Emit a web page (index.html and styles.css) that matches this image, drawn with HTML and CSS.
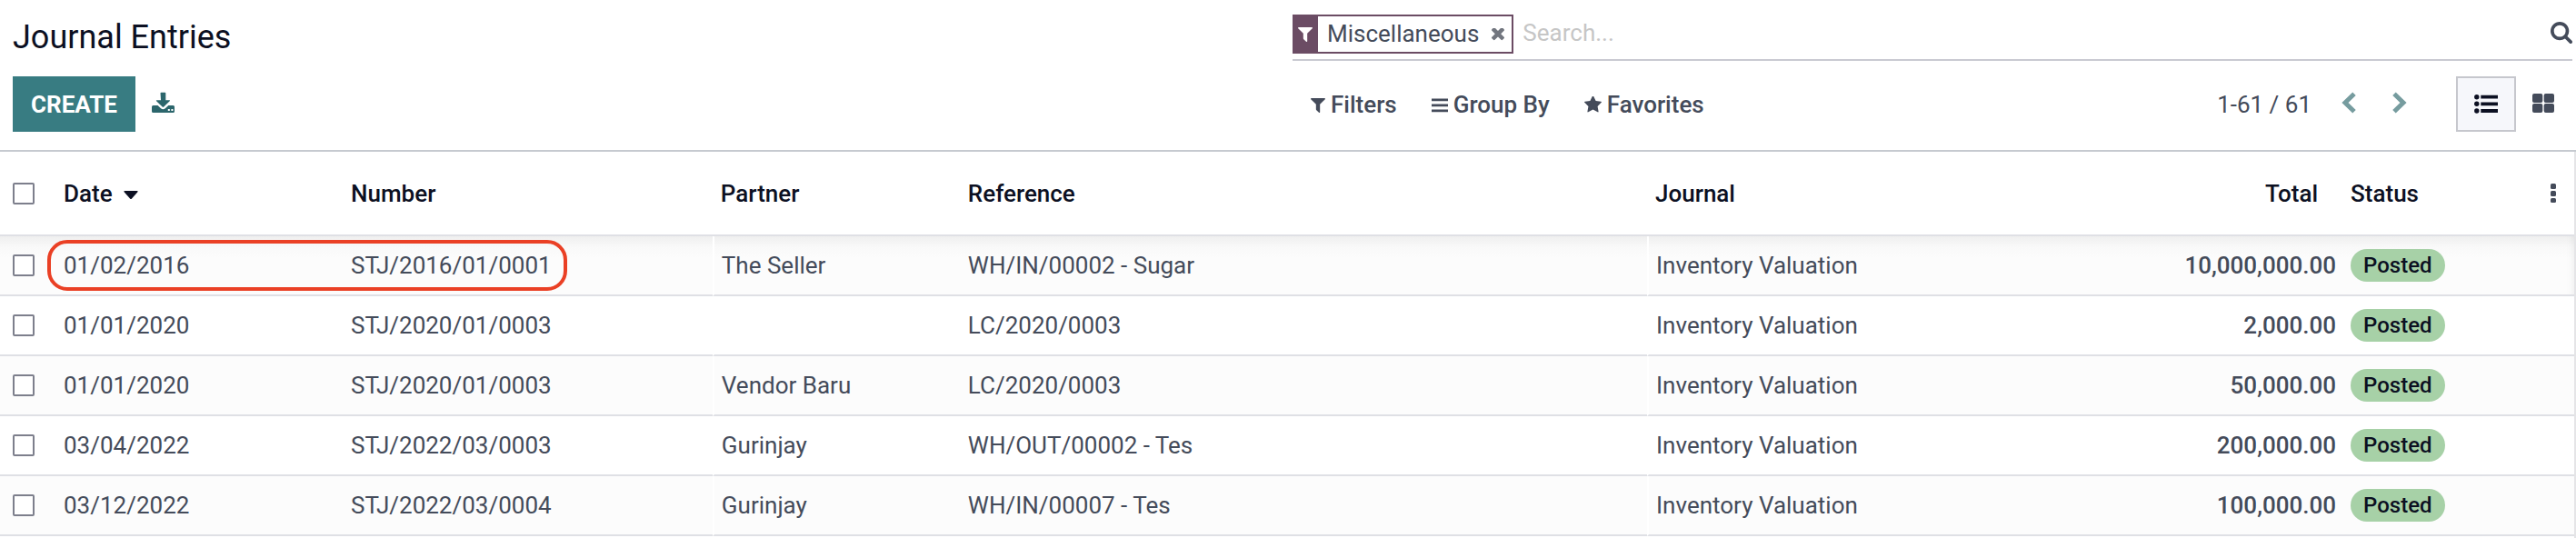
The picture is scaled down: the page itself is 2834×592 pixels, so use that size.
FILE: index.html
```
<!DOCTYPE html>
<html lang="en">
<head>
<meta charset="utf-8">
<title>Journal Entries</title>
<link rel="stylesheet" href="styles.css">
</head>
<body>
<svg class="sprite" aria-hidden="true">
  <symbol id="i-filter" viewBox="192 256 1408 1408"><path d="M1595 295q17 41-14 70l-493 493v742q0 42-39 59-13 5-25 5-27 0-45-19l-256-256q-19-19-19-45v-486l-493-493q-31-29-14-70 17-39 59-39h1280q42 0 59 39z"/></symbol>
</svg>
<header class="control-panel">
  <h1 class="title">Journal Entries</h1>
  <div class="search">
    <div class="facet">
      <span class="facet-icon"><svg class="icon-16"><use href="#i-filter"/></svg></span>
      <span class="facet-label">Miscellaneous</span>
      <button class="facet-remove" type="button" aria-label="Remove"><svg class="icon-14" viewBox="302 434 1188 1188"><path d="M1490 1322q0 40-28 68l-136 136q-28 28-68 28t-68-28l-294-294-294 294q-28 28-68 28t-68-28l-136-136q-28-28-28-68t28-68l294-294-294-294q-28-28-28-68t28-68l136-136q28-28 68-28t68 28l294 294 294-294q28-28 68-28t68 28l136 136q28 28 28 68t-28 68l-294 294 294 294q28 28 28 68z"/></svg></button>
    </div>
    <input class="search-input" type="text" placeholder="Search..." aria-label="Search">
    <button class="search-button" type="button" aria-label="Search"><svg class="icon-24" viewBox="64 128 1664 1664"><path d="M1216 832q0-185-131.5-316.5t-316.5-131.5-316.5 131.5-131.5 316.5 131.5 316.5 316.5 131.5 316.5-131.5 131.5-316.5zm512 832q0 52-38 90t-90 38q-54 0-90-38l-343-342q-179 124-399 124-143 0-273.5-55.5t-225-150-150-225-55.5-273.5 55.5-273.5 150-225 225-150 273.5-55.5 273.5 55.5 225 150 150 225 55.5 273.5q0 220-124 399l343 343q37 37 37 90z"/></svg></button>
  </div>
  <div class="actions">
    <button class="create" type="button">CREATE</button>
    <button class="download" type="button" aria-label="Export"><svg class="icon-download" viewBox="0 0 25 24"><path d="M9.500 1.500q0-.8.800-.8h4.200q.8 0 .8.800v7.800h4q1.300 0 .4 1l-6.500 6.300q-.8.700-1.600 0l-6.500-6.300q-.9-1 .4-1h4.500z"/><path d="M1.500 15h5l3.500 3.300q2.400 2 4.800 0l3.500-3.300h5.200q1.500 0 1.500 1.500v5q0 1.500-1.500 1.500h-22q-1.500 0-1.500-1.500v-5q0-1.500 1.500-1.500zm16.300 4.100v2h2v-2zm3.600 0v2h2v-2z" fill-rule="evenodd"/></svg></button>
  </div>
  <div class="toolbar">
    <div class="search-options">
      <button class="option" type="button"><svg class="icon-16"><use href="#i-filter"/></svg>Filters</button>
      <button class="option" type="button"><svg class="icon-18" viewBox="0 0 18 18"><path d="M0 1.500h18v2.800H0zM0 7.500h18v2.800H0zM0 13.500h18v2.800H0z"/></svg>Group By</button>
      <button class="option" type="button"><svg class="icon-19" viewBox="64 96 1664 1664"><path d="M1728 647q0 22-26 48l-363 354 86 500q1 7 1 20 0 21-10.500 35.500t-30.500 14.500q-19 0-40-12l-449-236-449 236q-22 12-40 12-21 0-31.500-14.500t-10.500-35.500q0-6 2-20l86-500-364-354q-25-27-25-48 0-37 56-46l502-73 225-455q19-41 49-41t49 41l225 455 502 73q56 9 56 46z"/></svg>Favorites</button>
    </div>
    <nav class="pager" aria-label="Pager">
      <span class="pager-text">1-61 / 61</span>
      <button class="pager-button" type="button" aria-label="Previous"><svg class="icon-24" viewBox="0 0 24 24"><path d="M18 2.300L8 12l10 9.700" class="chevron"/></svg></button>
      <button class="pager-button" type="button" aria-label="Next"><svg class="icon-24" viewBox="0 0 24 24"><path d="M6 2.300l10 9.700-10 9.700" class="chevron"/></svg></button>
    </nav>
    <div class="views">
      <button class="view active" type="button" aria-label="List view"><svg class="icon-26" viewBox="0 0 26 26"><circle cx="2.800" cy="4.700" r="2.700"/><circle cx="2.800" cy="12.300" r="2.700"/><circle cx="2.800" cy="20" r="2.700"/><path d="M7.300 2.800H26v3.800H7.300zM7.300 10.400H26v3.800H7.300zM7.300 18.100H26v3.800H7.300z"/></svg></button>
      <button class="view" type="button" aria-label="Kanban view"><svg class="icon-24" viewBox="0 0 24 24"><rect x="0" y="0" width="11.300" height="10" rx="2"/><rect x="12.700" y="0" width="11.300" height="10" rx="2"/><rect x="0" y="11" width="11.300" height="10" rx="2"/><rect x="12.700" y="11" width="11.300" height="10" rx="2"/></svg></button>
    </div>
  </div>
</header>
<main class="content">
  <table class="list">
    <colgroup>
      <col class="c-check"><col class="c-date"><col class="c-number"><col class="c-partner"><col class="c-reference"><col class="c-journal"><col class="c-total"><col class="c-status"><col class="c-menu">
    </colgroup>
    <thead>
      <tr>
        <th class="check"><input type="checkbox" aria-label="Select all"></th>
        <th>Date<svg class="caret" viewBox="0 0 16 10"><path d="M1.500 0h13q2 0 .7 1.500L9 8.500q-1 1-2 0L.8 1.500Q-.5 0 1.500 0z"/></svg></th>
        <th>Number</th>
        <th class="split">Partner</th>
        <th>Reference</th>
        <th class="split">Journal</th>
        <th class="amount">Total</th>
        <th>Status</th>
        <th class="menu"><button class="kebab" type="button" aria-label="Optional columns"><svg class="icon-kebab" viewBox="0 0 6 22"><rect y="0" width="6" height="6" rx="1.500"/><rect y="8" width="6" height="6" rx="1.500"/><rect y="16" width="6" height="5" rx="1.500"/></svg></button></th>
      </tr>
    </thead>
    <tbody>
      <tr>
        <td class="check"><input type="checkbox" aria-label="Select STJ/2016/01/0001"></td>
        <td class="marked">01/02/2016<span class="marker"></span></td>
        <td>STJ/2016/01/0001</td>
        <td class="split">The Seller</td>
        <td>WH/IN/00002 - Sugar</td>
        <td class="split">Inventory Valuation</td>
        <td class="amount">10,000,000.00</td>
        <td><span class="badge">Posted</span></td>
        <td></td>
      </tr>
      <tr>
        <td class="check"><input type="checkbox" aria-label="Select STJ/2020/01/0003"></td>
        <td>01/01/2020</td>
        <td>STJ/2020/01/0003</td>
        <td class="split"></td>
        <td>LC/2020/0003</td>
        <td class="split">Inventory Valuation</td>
        <td class="amount">2,000.00</td>
        <td><span class="badge">Posted</span></td>
        <td></td>
      </tr>
      <tr>
        <td class="check"><input type="checkbox" aria-label="Select STJ/2020/01/0003"></td>
        <td>01/01/2020</td>
        <td>STJ/2020/01/0003</td>
        <td class="split">Vendor Baru</td>
        <td>LC/2020/0003</td>
        <td class="split">Inventory Valuation</td>
        <td class="amount">50,000.00</td>
        <td><span class="badge">Posted</span></td>
        <td></td>
      </tr>
      <tr>
        <td class="check"><input type="checkbox" aria-label="Select STJ/2022/03/0003"></td>
        <td>03/04/2022</td>
        <td>STJ/2022/03/0003</td>
        <td class="split">Gurinjay</td>
        <td>WH/OUT/00002 - Tes</td>
        <td class="split">Inventory Valuation</td>
        <td class="amount">200,000.00</td>
        <td><span class="badge">Posted</span></td>
        <td></td>
      </tr>
      <tr>
        <td class="check"><input type="checkbox" aria-label="Select STJ/2022/03/0004"></td>
        <td>03/12/2022</td>
        <td>STJ/2022/03/0004</td>
        <td class="split">Gurinjay</td>
        <td>WH/IN/00007 - Tes</td>
        <td class="split">Inventory Valuation</td>
        <td class="amount">100,000.00</td>
        <td><span class="badge">Posted</span></td>
        <td></td>
      </tr>
    </tbody>
  </table>
</main>
</body>
</html>
```
FILE: styles.css
```
* {
  box-sizing: border-box;
}

body {
  margin: 0;
  min-height: 100vh;
  display: flex;
  flex-direction: column;
  background: #fff;
  color: #444b5a;
  font: 26px/38px Roboto, "Liberation Sans", sans-serif;
}

button,
input {
  font: inherit;
  color: inherit;
  margin: 0;
}

button {
  display: inline-flex;
  align-items: center;
  padding: 0;
  border: 0;
  background: none;
  cursor: pointer;
}

svg {
  display: block;
  flex: none;
  fill: currentColor;
}

.sprite {
  position: absolute;
  width: 0;
  height: 0;
}

.icon-14 { width: 14px; height: 14px; }
.icon-16 { width: 16px; height: 16px; }
.icon-18 { width: 18px; height: 18px; }
.icon-19 { width: 19px; height: 19px; }
.icon-24 { width: 24px; height: 24px; }
.icon-26 { width: 26px; height: 26px; }
.icon-download { width: 25px; height: 24px; }
.icon-kebab { width: 6px; height: 22px; }

.control-panel {
  display: grid;
  grid-template-columns: 1fr 1fr;
  row-gap: 17px;
  padding: 14px 4px 20px 14px;
  border-bottom: 2px solid #c6cad0;
}

.title {
  margin: 0;
  align-self: center;
  color: #0c1022;
  font-size: 36px;
  font-weight: 400;
}

.search {
  display: flex;
  align-items: flex-start;
  padding: 2px 0 6px;
  border-bottom: 2px solid #c9cad2;
}

.facet {
  display: flex;
  align-items: stretch;
  height: 43px;
  border: 2px solid #6b4c64;
}

.facet-icon {
  display: flex;
  align-items: center;
  padding: 0 6px 0 4px;
  background: #6b4c64;
  color: #fff;
}

.facet-label {
  padding: 0 10px;
}

.facet-remove {
  padding: 0 8px 0 4px;
  color: #72767f;
}

.search-input {
  flex: 1;
  min-width: 0;
  height: 40px;
  padding: 0 10px;
  border: 0;
  outline: 0;
  background: none;
}

.search-input::placeholder {
  color: #c6c6c6;
  opacity: 1;
}

.search-button {
  height: 40px;
}

.actions,
.toolbar,
.search-options,
.pager,
.views {
  display: flex;
  align-items: center;
}

.actions {
  gap: 18px;
}

.create {
  height: 61px;
  padding: 0 20px;
  background: #387c82;
  color: #fff;
  font-weight: 700;
}

.download {
  padding-bottom: 4px;
  color: #2c666c;
}

.search-options {
  flex: 1;
  gap: 38px;
  padding-left: 20px;
}

.option {
  gap: 6px;
  font-weight: 500;
}

.option svg {
  margin-top: 2px;
}

.pager {
  margin-right: 18px;
}

.pager-text {
  margin-right: 29px;
}

.pager-button {
  width: 56px;
  padding: 0 0 4px;
  color: #769c9f;
}

.chevron {
  fill: none;
  stroke: currentColor;
  stroke-width: 5;
}

.view {
  justify-content: center;
  width: 62px;
  height: 61px;
  padding-right: 2px;
}

.view.active {
  width: 66px;
  padding: 0;
  border: 2px solid #c6c7cd;
  background: #f6f7fb;
  color: #0c1022;
}

.content {
  flex: 1;
  border-right: 2px solid #e5e5e7;
}

.list {
  width: 100%;
  table-layout: fixed;
  border-collapse: separate;
  border-spacing: 0;
}

.c-check { width: 62px; }
.c-date { width: 11.16%; }
.c-number { width: 14.33%; }
.c-partner { width: 9.64%; }
.c-journal { width: 18.01%; }
.c-total { width: 9.04%; }
.c-status { width: 7.06%; }
.c-menu { width: 54px; }

.list th,
.list td {
  padding: 0 8px;
  border-bottom: 2px solid #dfe0e5;
  text-align: left;
  vertical-align: middle;
  white-space: nowrap;
}

.list th {
  height: 93px;
  color: #0c1022;
  font-weight: 500;
}

.list td {
  height: 66px;
}

.list .check {
  padding-left: 14px;
}

.list td.split {
  border-left: 2px solid #fff;
}

.list th.split {
  padding-left: 9px;
}

.list .amount {
  text-align: right;
  font-weight: 500;
}

.list th.amount {
  padding-right: 28px;
}

.list tbody tr:nth-child(odd) {
  background: #fcfcfc;
}

.list tbody tr:first-child {
  background: linear-gradient(#efefef, #f9f9f9 12px, #fcfcfc 24px);
}

.list tbody tr:first-child td:last-child {
  box-shadow: inset -10px 0 10px -10px rgba(0, 0, 0, 0.08);
}

.list input {
  display: block;
  appearance: none;
  width: 24px;
  height: 24px;
  border: 2px solid #7d7f8c;
  border-radius: 2px;
  background: #fff;
}

.caret {
  display: inline-block;
  width: 16px;
  height: 10px;
  margin-left: 12px;
  vertical-align: middle;
}

.list .menu {
  padding-right: 20px;
}

.kebab {
  display: flex;
  margin-left: auto;
  color: #444b5a;
}

.marked {
  position: relative;
}

.marker {
  position: absolute;
  top: 4px;
  bottom: 4px;
  left: -10px;
  width: 181%;
  border: 4px solid #ea4025;
  border-radius: 22px;
  pointer-events: none;
}

.badge {
  display: block;
  width: fit-content;
  padding: 0 14px;
  border-radius: 18px;
  background: #a7d1a7;
  color: #0c1022;
  font-size: 24px;
  font-weight: 500;
  line-height: 36px;
}
```
